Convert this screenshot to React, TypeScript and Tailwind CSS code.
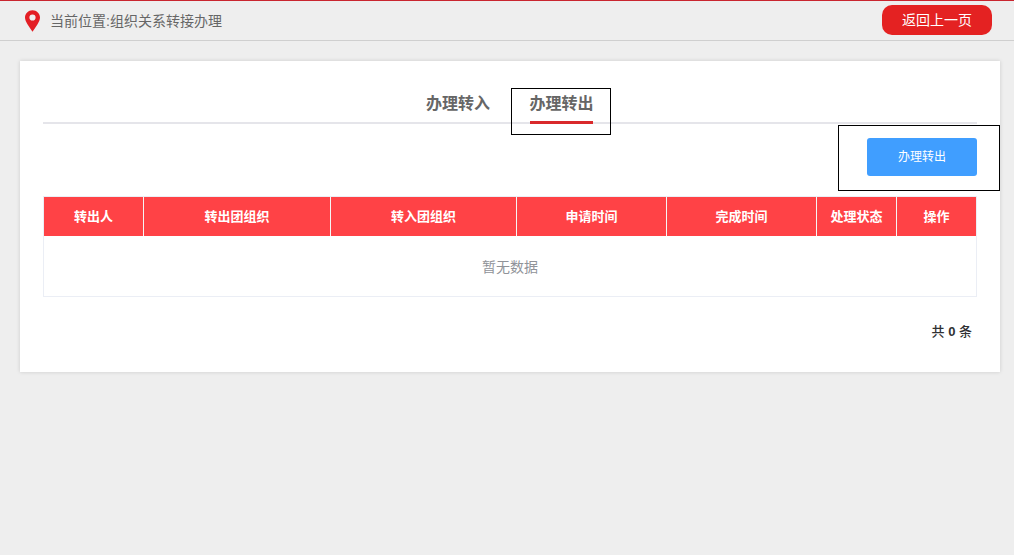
const columns = [
  { label: "转出人", width: "w-[100px]" },
  { label: "转出团组织", width: "w-[187px]" },
  { label: "转入团组织", width: "w-[186px]" },
  { label: "申请时间", width: "w-[150px]" },
  { label: "完成时间", width: "w-[150px]" },
  { label: "处理状态", width: "w-[80px]" },
  { label: "操作", width: "w-[79px]" },
]

const font = "font-['Liberation_Sans','Noto_Sans_CJK_SC',sans-serif]"

export default function App() {
  return (
    <div className={`min-h-[555px] bg-[#eeeeee] ${font}`}>
      {/* Top bar */}
      <div className="flex h-[41px] items-center justify-between border-t border-b border-t-[#c9252f] border-b-[#cfcfcf] pl-[24px] pr-[22px]">
        <div className="flex items-center gap-[9px] pt-[1px]">
          <svg width="17" height="22" viewBox="0 0 17 22" className="shrink-0">
            <path
              fillRule="evenodd"
              fill="#e31e24"
              d="M8.5 0.3C4.3 0.3 1 3.6 1 7.6c0 2.2 1 4.2 2.3 6.3 1.6 2.6 3.7 5.2 5.2 7.8 1.5-2.6 3.6-5.2 5.2-7.8C15 11.8 16 9.8 16 7.6 16 3.6 12.7 0.3 8.5 0.3zM8.5 4.4a3.1 3.1 0 1 1 0 6.2 3.1 3.1 0 0 1 0-6.2z"
            />
          </svg>
          <span className="text-[14px] text-[#666666]">当前位置:组织关系转接办理</span>
        </div>
        <button className="mb-[1px] h-[30px] w-[110px] rounded-[10px] bg-[#e42222] text-[14px] text-white">返回上一页</button>
      </div>

      {/* Card */}
      <div className="ml-[20px] mr-[14px] mt-[20px] h-[311px] bg-white px-[23px] pt-[27px] shadow-[0_0_4px_rgba(0,0,0,0.15)]">
        {/* Tabs */}
        <div className="flex h-[36px] justify-center border-b-2 border-[#e5e5ea]">
          <div className="flex h-[47px] pl-[16px]">
            <div className="mr-[20px] flex h-[35px] items-center px-[1px] pb-[4px] text-[16px] font-bold text-[#666666]">办理转入</div>
            <div className="h-[47px] w-[100px] border border-black px-[18px]">
              <div className="flex h-[35px] w-[63px] items-center justify-center border-b-[3px] border-[#d9292b] pb-[2px] text-[16px] font-bold whitespace-nowrap text-[#666666]">
                办理转出
              </div>
            </div>
          </div>
        </div>

        {/* Action */}
        <div className="mt-[1px] -mr-[23px] flex justify-end">
          <div className="flex h-[66px] w-[162px] items-center justify-end border border-black pb-[2px] pr-[22px]">
            <button className="h-[38px] w-[110px] rounded-[3px] bg-[#409eff] text-[12px] text-white">办理转出</button>
          </div>
        </div>

        {/* Table */}
        <div className="mt-[5px] border border-[#ebeef5]">
          <div className="flex h-[39px] bg-[#ff4246]">
            {columns.map((col, i) => (
              <div
                key={col.label}
                className={`flex items-center justify-center text-[13px] font-bold text-white ${col.width} ${i < columns.length - 1 ? "border-r border-[#f5f5f5]" : ""}`}
              >
                {col.label}
              </div>
            ))}
          </div>
          <div className="flex h-[60px] items-center justify-center pt-[2px] text-[14px] text-[#909399]">暂无数据</div>
        </div>

        {/* Pagination */}
        <div className="mt-[26px] pr-[5px] text-right text-[13px] leading-[18px] font-medium text-[#303133]">
          共 <span className="font-bold">0</span> 条
        </div>
      </div>
    </div>
  )
}
